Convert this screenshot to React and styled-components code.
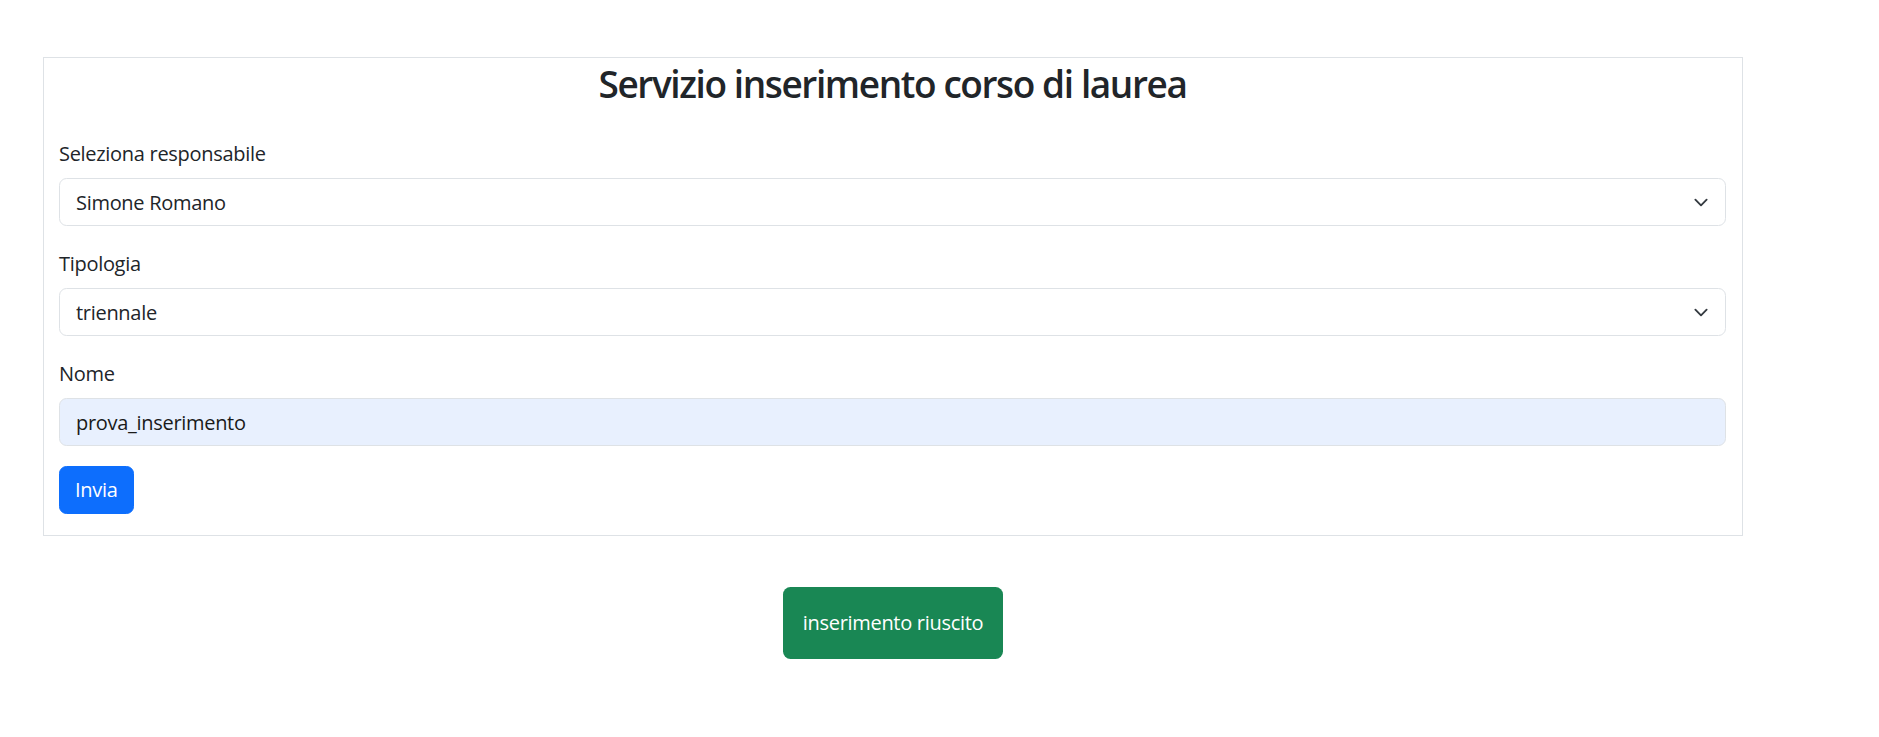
import React from "react";
import styled, { createGlobalStyle } from "styled-components";

const Global = createGlobalStyle`
  html, body { margin: 0; padding: 0; background: #fff; }
  body {
    font-family: "Open Sans", "Noto Sans", "Liberation Sans", sans-serif;
    color: #212529;
    letter-spacing: -0.3px;
    -webkit-font-smoothing: antialiased;
  }
  * { box-sizing: border-box; }
`;

const Page = styled.div`
  width: 1700px;
  margin-left: 43px;
  padding-top: 57px;
  display: flex;
  flex-direction: column;
  align-items: center;
`;

const Card = styled.div`
  width: 100%;
  border: 1px solid #dee2e6;
  padding: 2px 16px 21px 15px;
  display: flex;
  flex-direction: column;
`;

const Title = styled.h2`
  margin: 0 0 31px;
  font-size: 37px;
  line-height: 48px;
  font-weight: 600;
  letter-spacing: -1.4px;
  text-align: center;
  color: #212529;
`;

const Group = styled.div`
  display: flex;
  flex-direction: column;
  margin-bottom: ${(p) => (p.$last ? "20px" : "23px")};
`;

const Label = styled.label`
  font-size: 20px;
  line-height: 30px;
  margin-bottom: 9px;
  color: #212529;
`;

const SelectWrap = styled.div`
  position: relative;
  height: 48px;
`;

const Select = styled.select`
  appearance: none;
  -webkit-appearance: none;
  width: 100%;
  height: 48px;
  padding: 0 50px 0 16px;
  font: inherit;
  font-size: 20px;
  letter-spacing: -0.3px;
  color: #212529;
  background: #fff;
  border: 1px solid #dee2e6;
  border-radius: 7.5px;
  outline: none;
`;

const Chevron = styled.svg`
  position: absolute;
  right: 15px;
  top: 16.5px;
  width: 20px;
  height: 15px;
  pointer-events: none;
`;

const Input = styled.input`
  width: 100%;
  height: 48px;
  padding: 0 16px;
  font: inherit;
  font-size: 20px;
  letter-spacing: -0.3px;
  color: #1a1a1a;
  background: #e8f0fe;
  border: 1px solid #dee2e6;
  border-radius: 7.5px;
  outline: none;
`;

const SubmitButton = styled.button`
  align-self: flex-start;
  height: 48px;
  padding: 0 15px;
  font: inherit;
  font-size: 20px;
  line-height: 30px;
  letter-spacing: -0.3px;
  color: #fff;
  background: #0d6efd;
  border: 1px solid #0d6efd;
  border-radius: 7.5px;
  cursor: pointer;
`;

const Alert = styled.div`
  margin-top: 51px;
  padding: 21px 20px;
  font-size: 20px;
  line-height: 30px;
  color: #fff;
  background: #198754;
  border-radius: 7.5px;
`;

function Arrow() {
  return (
    <Chevron viewBox="0 0 16 16">
      <path
        d="m2 5 6 6 6-6"
        fill="none"
        stroke="#343a40"
        strokeWidth="2"
        strokeLinecap="round"
        strokeLinejoin="round"
      />
    </Chevron>
  );
}

export default function App() {
  return (
    <>
      <Global />
      <Page>
        <Card>
          <Title>Servizio inserimento corso di laurea</Title>
          <Group>
            <Label>Seleziona responsabile</Label>
            <SelectWrap>
              <Select defaultValue="sr">
                <option value="sr">Simone Romano</option>
              </Select>
              <Arrow />
            </SelectWrap>
          </Group>
          <Group>
            <Label>Tipologia</Label>
            <SelectWrap>
              <Select defaultValue="t">
                <option value="t">triennale</option>
                <option value="m">magistrale</option>
              </Select>
              <Arrow />
            </SelectWrap>
          </Group>
          <Group $last>
            <Label>Nome</Label>
            <Input defaultValue="prova_inserimento" />
          </Group>
          <SubmitButton>Invia</SubmitButton>
        </Card>
        <Alert>inserimento riuscito</Alert>
      </Page>
    </>
  );
}
